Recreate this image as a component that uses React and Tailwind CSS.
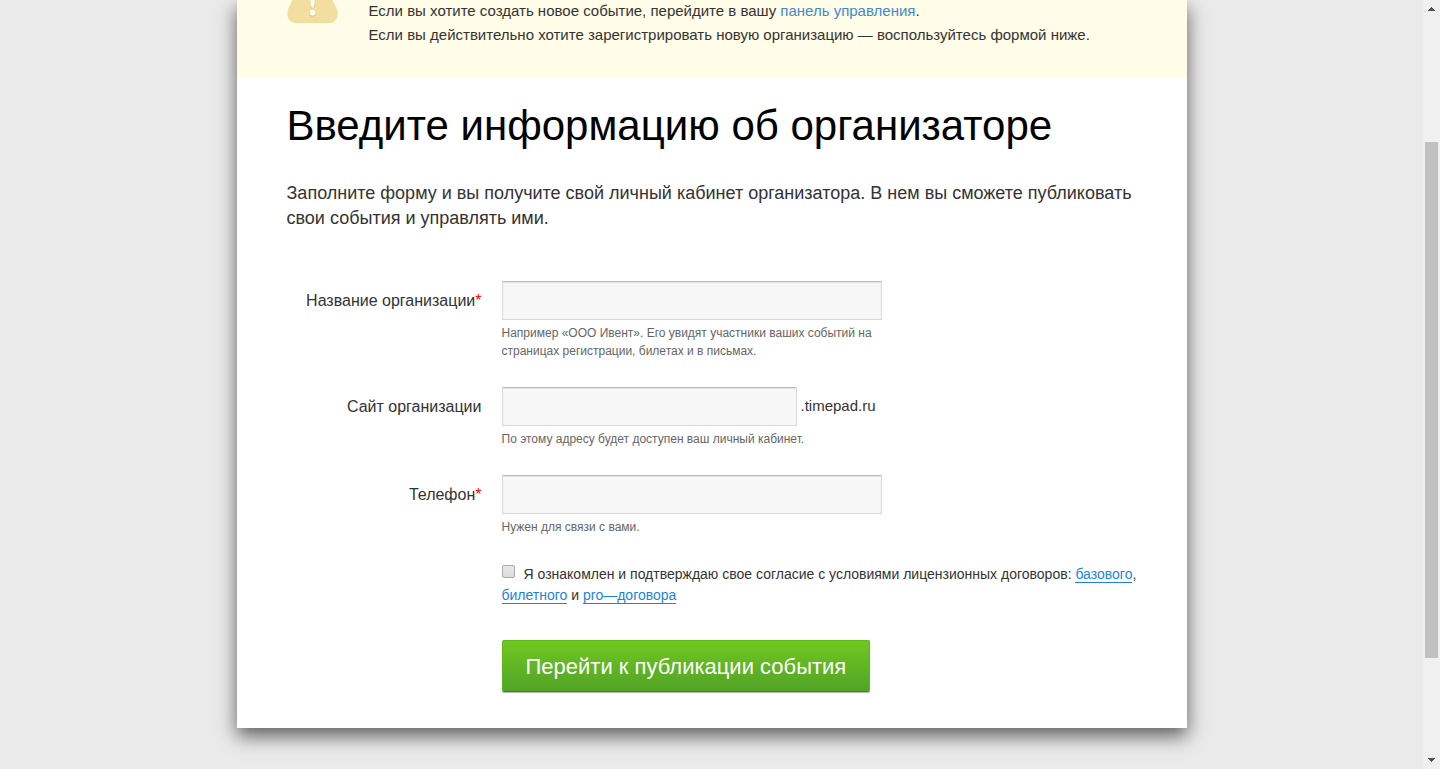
import { useState } from "react";

const inputClass =
  "block h-[39px] rounded-none border border-[#d9d9d9] border-t-[#bcbcbc] bg-[#f7f7f7] px-2 text-base text-[#333] shadow-[inset_0_1px_1px_rgba(0,0,0,0.08)] outline-none";
const linkClass = "border-b border-[#1d83d9] text-[#1d83d9]";

function WarningIcon() {
  return (
    <svg width="51" height="23" viewBox="0 0 51 23" className="shrink-0" aria-hidden="true">
      <path
        d="M5.500 0 L1.500 8 C-1.500 15 1 23 10 23 H41 C50 23 52.500 15 49.500 8 L45.500 0 Z"
        fill="#f2df9f"
      />
      <path d="M22.500 -1 L23.200 6 Q23.500 8.500 25.500 8.500 Q27.500 8.500 27.800 6 L28.500 -1 Z" fill="#dcc88a" />
      <path d="M23 -1 L23.800 6 Q24 7.700 25.500 7.700 Q27 7.700 27.200 6 L28 -1 Z" fill="#fffce8" />
      <circle cx="25.500" cy="13" r="3.700" fill="#dac78c" />
      <circle cx="25.500" cy="12.500" r="3.100" fill="#fffce8" />
    </svg>
  );
}

function Field({ id, label, required, hint, suffix, type = "text" }) {
  const [value, setValue] = useState("");

  return (
    <div className="flex items-start gap-5">
      <label htmlFor={id} className="w-[195px] shrink-0 text-right text-base leading-[39px] text-[#333]">
        {label}
        {required && <span className="text-[#f00]">*</span>}
      </label>
      <div className="w-[380px]">
        <div className="flex items-center gap-1">
          <input
            id={id}
            type={type}
            value={value}
            onChange={(e) => setValue(e.target.value)}
            className={`${inputClass} ${suffix ? "w-[295px]" : "w-full"}`}
          />
          {suffix && <span className="text-[15px] text-[#333]">{suffix}</span>}
        </div>
        <p className="mt-1 text-xs leading-[18px] text-[#666]">{hint}</p>
      </div>
    </div>
  );
}

function ScrollRail() {
  return (
    <div className="flex w-[17px] shrink-0 flex-col items-center bg-[#f0f0f0]" aria-hidden="true">
      <svg width="7" height="4" viewBox="0 0 7 4" className="mt-[7px]" shapeRendering="crispEdges">
        <path d="M3 0h1v1h1v1h1v1h1v1H0V3h1V2h1V1h1z" fill="#505050" />
      </svg>
      <div className="grow-[131]" />
      <div className="w-[13px] grow-[516] bg-[#c1c1c1]" />
      <div className="grow-[100]" />
      <svg width="7" height="4" viewBox="0 0 7 4" className="mb-[7px]" shapeRendering="crispEdges">
        <path d="M0 0h7v1H6v1H5v1H4v1H3V3H2V2H1V1H0z" fill="#505050" />
      </svg>
    </div>
  );
}

export default function App() {
  const [agreed, setAgreed] = useState(false);

  return (
    <div className="flex min-h-screen bg-[#eaeaea] font-['Liberation_Sans',Arial,sans-serif] text-[#333]">
      <div className="min-w-0 grow pb-10">
        <main className="mx-auto max-w-[950px] bg-white shadow-[0_8px_18px_rgba(0,0,0,0.6)]">
          <div className="flex items-start gap-[31px] bg-[#fffce8] px-[50px] pb-[30px]">
            <WarningIcon />
            <div className="-mt-px text-[15px] leading-6">
              <p>
                Если вы хотите создать новое событие, перейдите в вашу{" "}
                <a href="#dashboard" className="text-[#428bca]">
                  панель управления
                </a>
                .
              </p>
              <p>Если вы действительно хотите зарегистрировать новую организацию — воспользуйтесь формой ниже.</p>
            </div>
          </div>

          <div className="px-[50px] pt-6 pb-9">
            <h1 className="text-[42px] leading-[50px] text-black">Введите информацию об организаторе</h1>
            <p className="mt-[30px] text-lg leading-[25px]">
              Заполните форму и вы получите свой личный кабинет организатора. В нем вы сможете публиковать свои
              события и управлять ими.
            </p>

            <form className="mt-[50px]" onSubmit={(e) => e.preventDefault()}>
              <div className="flex flex-col gap-[27px]">
                <Field
                  id="org-name"
                  label="Название организации"
                  required
                  hint="Например «ООО Ивент». Его увидят участники ваших событий на страницах регистрации, билетах и в письмах."
                />
                <Field
                  id="org-site"
                  label="Сайт организации"
                  suffix=".timepad.ru"
                  hint="По этому адресу будет доступен ваш личный кабинет."
                />
                <Field id="org-phone" type="tel" label="Телефон" required hint="Нужен для связи с вами." />
              </div>

              <div className="mt-7 ml-[215px] text-sm leading-[21px]">
                <input
                  id="agree"
                  type="checkbox"
                  checked={agreed}
                  onChange={(e) => setAgreed(e.target.checked)}
                  className="mr-[9px] size-[13px] appearance-none rounded-[2px] border border-[#a9a9a9] bg-linear-to-b from-[#e8e8e8] to-[#dcdcdc] align-[1px] checked:from-[#777] checked:to-[#555]"
                />
                <label htmlFor="agree">
                  Я ознакомлен и подтверждаю свое согласие с условиями лицензионных договоров:
                </label>{" "}
                <a href="#basic" className={linkClass}>
                  базового
                </a>
                ,{" "}
                <a href="#ticket" className={linkClass}>
                  билетного
                </a>{" "}
                и{" "}
                <a href="#pro" className={linkClass}>
                  pro—договора
                </a>
              </div>

              <button
                type="submit"
                className="mt-[34px] ml-[215px] block h-[52px] cursor-pointer rounded-[2px] border border-[#5fb41f] border-b-[#44851b] bg-linear-to-b from-[#70c81e] to-[#52a326] px-[23px] text-[22px] text-white shadow-[0_1px_1px_rgba(0,0,0,0.3)]"
              >
                Перейти к публикации события
              </button>
            </form>
          </div>
        </main>
      </div>
      <ScrollRail />
    </div>
  );
}
